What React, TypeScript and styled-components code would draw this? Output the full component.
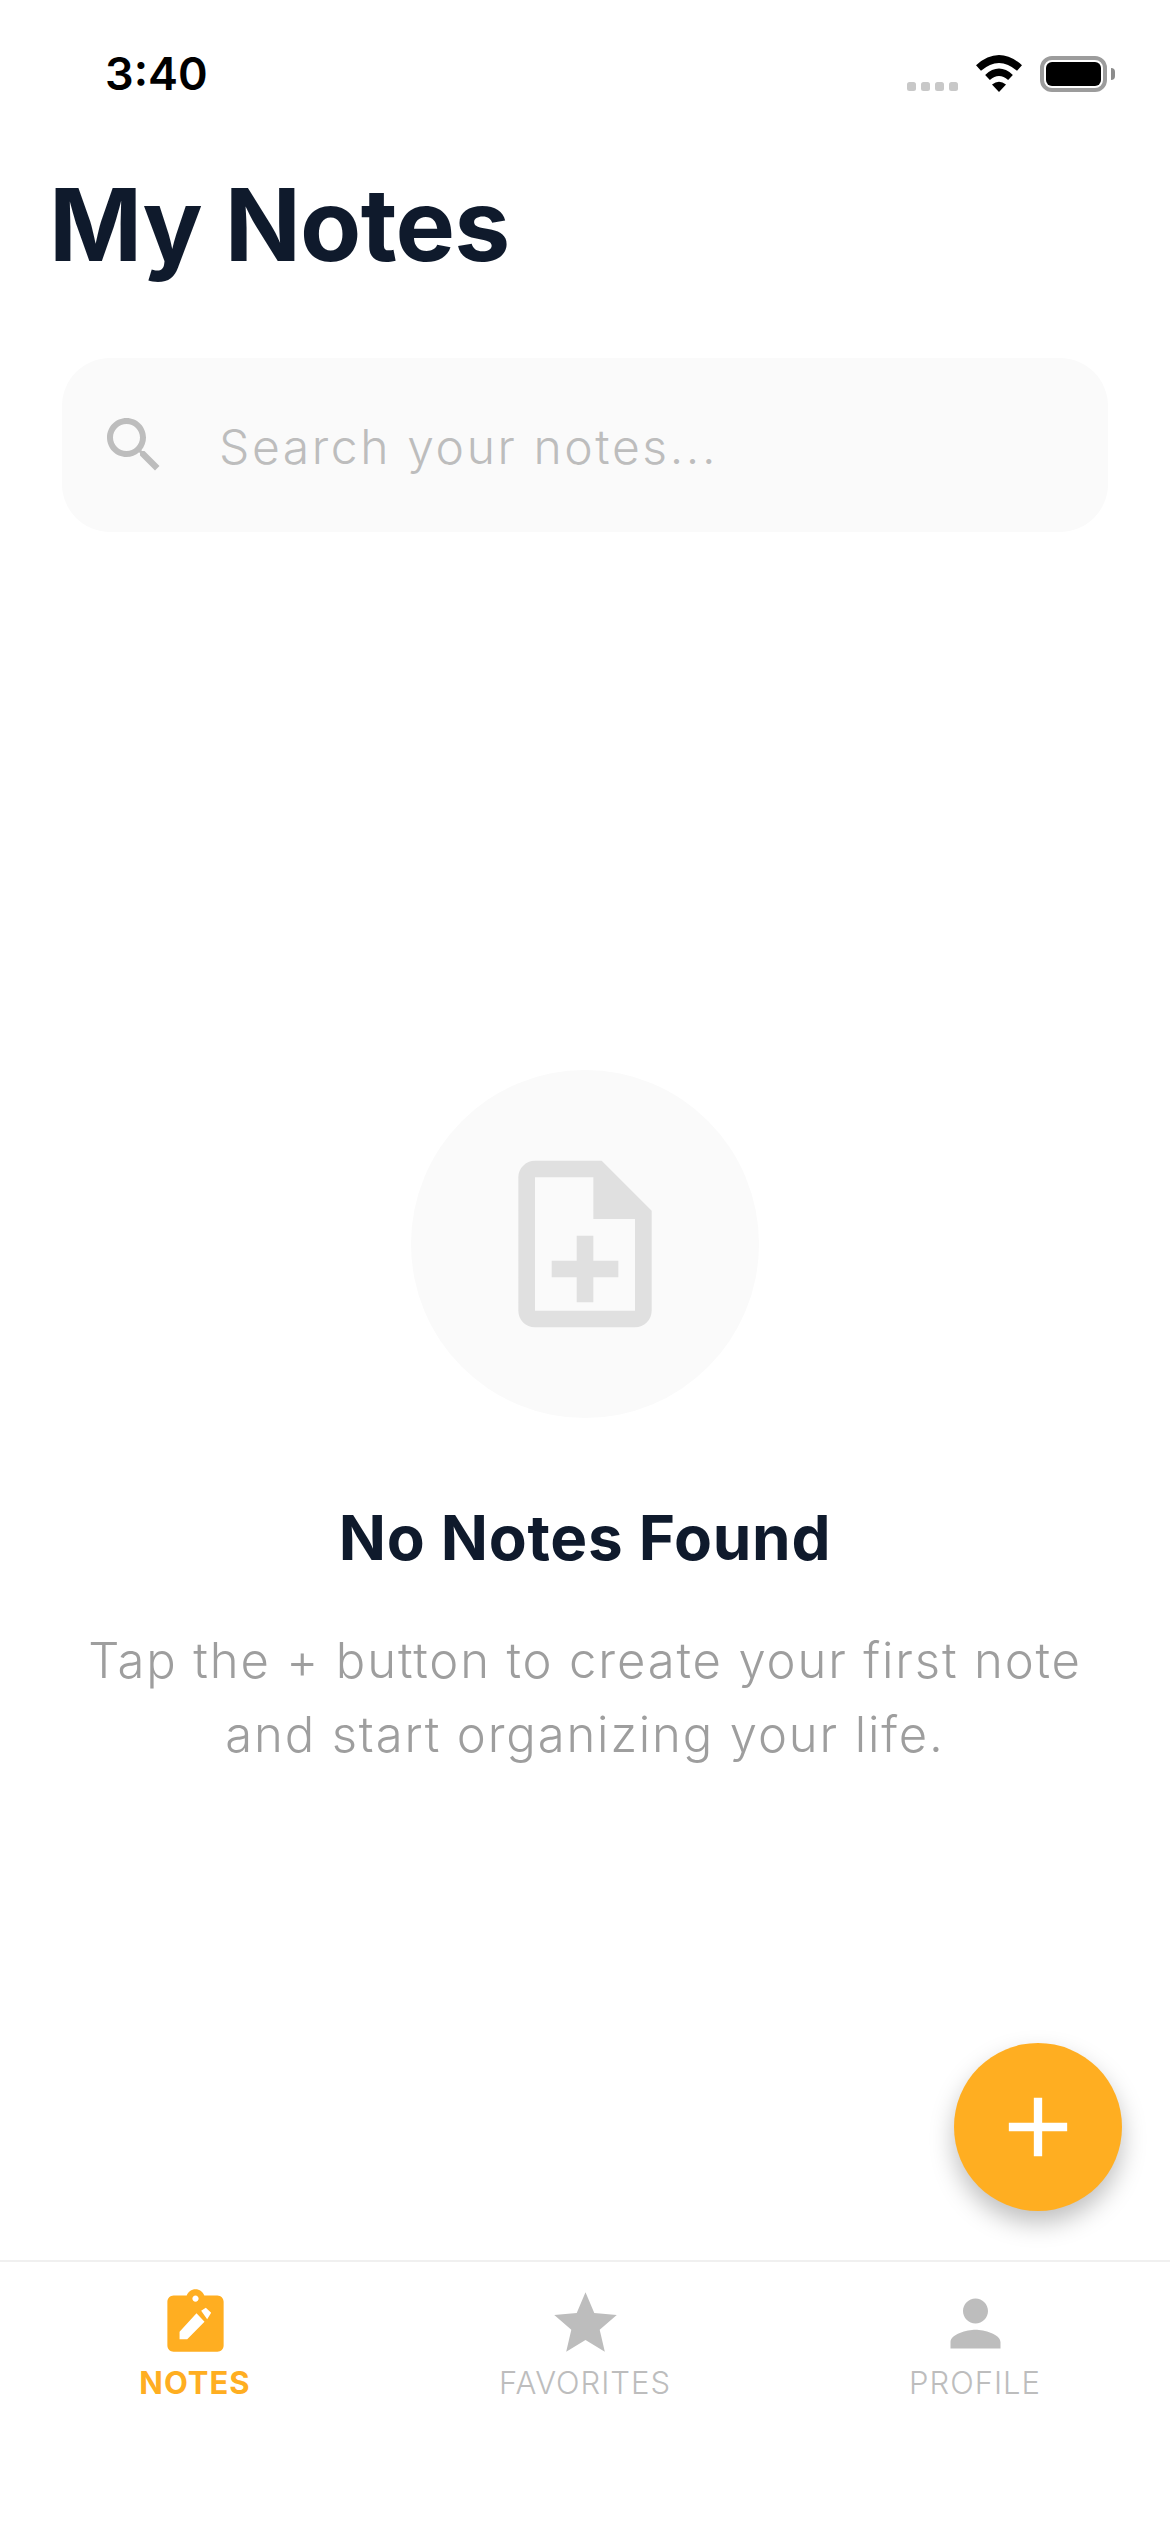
import * as React from "react"
import styled, { createGlobalStyle } from "styled-components"

const Global = createGlobalStyle`
  html, body { margin: 0; padding: 0; background: #fff; }
  * { box-sizing: border-box; }
`

const Screen = styled.div`
  position: relative;
  display: flex;
  flex-direction: column;
  width: 1170px;
  height: 2532px;
  overflow: hidden;
  background: #fff;
  font-family: Inter, "Liberation Sans", sans-serif;
`

const StatusBar = styled.div`
  display: flex;
  justify-content: space-between;
  align-items: flex-start;
  height: 163px;
  padding: 47px 55px 0 105px;
`

const Time = styled.div`
  font-size: 45px;
  line-height: 54px;
  font-weight: 600;
  color: #000;
`

const StatusIcons = styled.div`
  display: flex;
  align-items: flex-start;
  padding-top: 8px;
`

const Dots = styled.div`
  display: flex;
  gap: 5px;
  margin: 27px 17px 0 0;
`

const Dot = styled.span`
  width: 9px;
  height: 9px;
  border-radius: 2.5px;
  background: #c8c8c8;
`

const Wifi = styled.svg`
  width: 48px;
  height: 37px;
  margin-right: 17px;
`

const Battery = styled.div`
  position: relative;
  width: 67px;
  height: 36px;
  margin: 1px 8px 0 0;
  padding: 2px;
  border: 4px solid #9c9c9c;
  border-radius: 12px;
  background: #fff;

  &::before {
    content: "";
    display: block;
    height: 100%;
    border-radius: 6px;
    background: #000;
  }

  &::after {
    content: "";
    position: absolute;
    top: 8px;
    right: -12px;
    width: 4px;
    height: 12px;
    border-radius: 0 6px 6px 0;
    background: #8c8c8c;
  }
`

const Title = styled.h1`
  margin: 0;
  padding-left: 49px;
  font-size: 100px;
  line-height: 124px;
  font-weight: 700;
  letter-spacing: -0.8px;
  color: #0f1a2c;
`

const SearchBar = styled.div`
  display: flex;
  align-items: center;
  gap: 49px;
  height: 174px;
  margin: 71px 62px 0;
  padding-left: 36px;
  border-radius: 48px;
  background: #fafafa;
`

const SearchIcon = styled.svg`
  width: 72px;
  height: 72px;
  fill: #bdbdbd;
  flex: none;
`

const Placeholder = styled.span`
  position: relative;
  top: 1px;
  font-size: 48px;
  font-weight: 300;
  letter-spacing: 2.6px;
  color: #bdbdbd;
`

const Empty = styled.main`
  flex: 1;
  display: flex;
  flex-direction: column;
  align-items: center;
  padding-top: 538px;
`

const IconCircle = styled.div`
  display: flex;
  align-items: center;
  justify-content: center;
  width: 348px;
  height: 348px;
  border-radius: 50%;
  background: #fafafa;
`

const DocIcon = styled.svg`
  width: 200px;
  height: 200px;
  fill: #e0e0e0;
`

const EmptyTitle = styled.h2`
  margin: 84px 0 0;
  font-size: 62px;
  line-height: 72px;
  font-weight: 700;
  letter-spacing: 0.7px;
  color: #0f1a2c;
`

const EmptyText = styled.p`
  margin: 50px 0 0;
  font-size: 49px;
  line-height: 74px;
  font-weight: 300;
  letter-spacing: 1.85px;
  text-align: center;
  color: #9e9e9e;
`

const Fab = styled.button`
  position: absolute;
  right: 48px;
  bottom: 321px;
  display: flex;
  align-items: center;
  justify-content: center;
  width: 168px;
  height: 168px;
  padding: 0;
  border: 0;
  border-radius: 50%;
  background: #ffae21;
  box-shadow: 0 12px 24px rgba(0, 0, 0, 0.25);
`

const PlusIcon = styled.svg`
  width: 100px;
  height: 100px;
  fill: #fff;
`

const TabBar = styled.nav`
  display: grid;
  grid-template-columns: repeat(3, 1fr);
  height: 272px;
  padding-top: 24px;
  border-top: 2px solid #f0f0f0;
`

const Tab = styled.div<{ $active?: boolean }>`
  display: flex;
  flex-direction: column;
  align-items: center;
  color: ${(p) => (p.$active ? "#ffae21" : "#bdbdbd")};
`

const TabIcon = styled.svg`
  width: 75px;
  height: 75px;
  fill: currentColor;
`

const TabLabel = styled.span<{ $active?: boolean }>`
  margin-top: 3px;
  font-size: 31px;
  line-height: 38px;
  font-weight: ${(p) => (p.$active ? 700 : 300)};
  letter-spacing: 1px;
`

export default function App() {
  return (
    <Screen>
      <Global />
      <StatusBar>
        <Time>3:40</Time>
        <StatusIcons>
          <Dots>
            <Dot />
            <Dot />
            <Dot />
            <Dot />
          </Dots>
          <Wifi viewBox="0 0 48 37">
            <path d="M3.5 13 Q24 -5 44.5 13" fill="none" stroke="#000" strokeWidth="7.5" />
            <path d="M12.5 22.5 Q24 12 35.5 22.5" fill="none" stroke="#000" strokeWidth="7" />
            <path d="M17 29.5 Q24 24 31 29.5 L24 37 Z" fill="#000" />
          </Wifi>
          <Battery />
        </StatusIcons>
      </StatusBar>

      <Title>My Notes</Title>

      <SearchBar>
        <SearchIcon viewBox="0 0 24 24">
          <path d="M15.5 14h-.79l-.28-.27C15.41 12.59 16 11.11 16 9.5 16 5.91 13.09 3 9.5 3S3 5.91 3 9.5 5.91 16 9.5 16c1.61 0 3.09-.59 4.23-1.57l.27.28v.79l5 4.99L20.49 19l-4.99-5zm-6 0C7.01 14 5 11.99 5 9.5S7.01 5 9.5 5 14 7.01 14 9.5 11.99 14 9.5 14z" />
        </SearchIcon>
        <Placeholder>Search your notes...</Placeholder>
      </SearchBar>

      <Empty>
        <IconCircle>
          <DocIcon viewBox="0 0 24 24">
            <path d="M13 11h-2v3H8v2h3v3h2v-3h3v-2h-3zm1-9H6c-1.1 0-2 .9-2 2v16c0 1.1.89 2 1.99 2H18c1.1 0 2-.9 2-2V8l-6-6zm4 18H6V4h7v5h5v11z" />
          </DocIcon>
        </IconCircle>
        <EmptyTitle>No Notes Found</EmptyTitle>
        <EmptyText>
          Tap the + button to create your first note
          <br />
          and start organizing your life.
        </EmptyText>
      </Empty>

      <Fab>
        <PlusIcon viewBox="0 0 24 24">
          <path d="M19 13h-6v6h-2v-6H5v-2h6V5h2v6h6v2z" />
        </PlusIcon>
      </Fab>

      <TabBar>
        <Tab $active>
          <TabIcon viewBox="0 0 24 24">
            <path d="M19 3h-4.18C14.4 1.84 13.3 1 12 1c-1.3 0-2.4.84-2.82 2H5c-1.1 0-2 .9-2 2v14c0 1.1.9 2 2 2h14c1.1 0 2-.9 2-2V5c0-1.1-.9-2-2-2zm-7 0c.55 0 1 .45 1 1s-.45 1-1 1-1-.45-1-1 .45-1 1-1z" fillRule="evenodd" />
            <path d="M6.9 14.6V17.07H9.35L14.88 11.4 12.32 8.75zM13.81 7.89 15.3 6.93 17.01 8.53 15.73 10.67z" fill="#fff" />
          </TabIcon>
          <TabLabel $active>NOTES</TabLabel>
        </Tab>
        <Tab>
          <TabIcon viewBox="0 0 24 24">
            <path d="M12 17.27L18.18 21l-1.64-7.03L22 9.24l-7.19-.61L12 2 9.19 8.63 2 9.24l5.46 4.73L5.82 21z" />
          </TabIcon>
          <TabLabel>FAVORITES</TabLabel>
        </Tab>
        <Tab>
          <TabIcon viewBox="0 0 24 24">
            <path d="M12 12c2.21 0 4-1.79 4-4s-1.79-4-4-4-4 1.79-4 4 1.79 4 4 4zm0 2c-2.67 0-8 1.34-8 4v2h16v-2c0-2.66-5.33-4-8-4z" />
          </TabIcon>
          <TabLabel>PROFILE</TabLabel>
        </Tab>
      </TabBar>
    </Screen>
  )
}
